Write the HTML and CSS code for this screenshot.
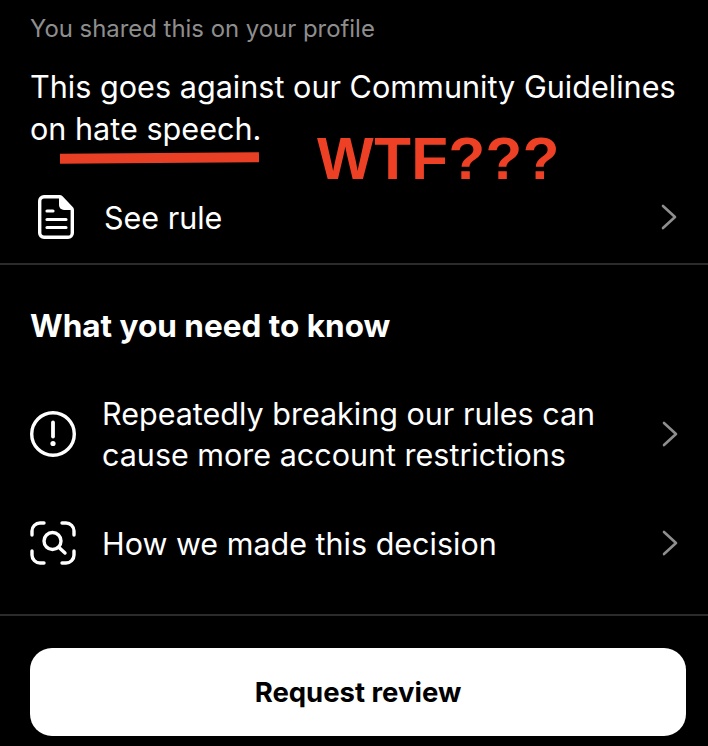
FILE: index.html
```html
<!DOCTYPE html>
<html lang="en">
<head>
    <meta charset="UTF-8">
    <title>Account status</title>
    <link rel="stylesheet" href="styles.css">
</head>
<body>
    <div class="screen">
        <section class="top-section">
            <div class="shared-note">You shared this on your profile</div>
            <div class="headline">This goes against our Community Guidelines<br>on hate speech.</div>
            <div class="scribble-line"></div>
            <div class="scribble-text">WTF???</div>
            <div class="row rule-row">
                <svg class="icon doc-icon" viewBox="0 0 36 44" width="36" height="44">
                    <path d="M6 1.700h15.500a2.500 2.500 0 0 1 1.800.8l10 10.400a2.500 2.500 0 0 1 1 1.900V38a4.300 4.300 0 0 1-4.300 4.300H6A4.300 4.300 0 0 1 1.700 38V6A4.300 4.300 0 0 1 6 1.700Z" fill="none" stroke="#fff" stroke-width="3.400"/>
                    <path d="M21 2v8a5 5 0 0 0 5 5h8V12L24 2Z" fill="#fff"/>
                    <path d="M9 16h6M9 24.500h19M9 32.500h19" fill="none" stroke="#fff" stroke-width="3.200" stroke-linecap="round"/>
                </svg>
                <span class="row-label">See rule</span>
                <svg class="chevron" viewBox="0 0 16 26" width="16" height="26"><path d="M2 2l12 11L2 24" fill="none" stroke="#8e8e8e" stroke-width="2.600" stroke-linecap="round" stroke-linejoin="round"/></svg>
            </div>
        </section>

        <section class="know-section">
            <h2>What you need to know</h2>
            <div class="row info-row">
                <svg class="icon" viewBox="0 0 46 46" width="46" height="46">
                    <circle cx="23" cy="23" r="21.300" fill="none" stroke="#fff" stroke-width="3.400"/>
                    <path d="M23 11.500v14" fill="none" stroke="#fff" stroke-width="3.800" stroke-linecap="round"/>
                    <circle cx="23" cy="32.500" r="2.600" fill="#fff"/>
                </svg>
                <span class="row-label">Repeatedly breaking our rules can cause more account restrictions</span>
                <svg class="chevron" viewBox="0 0 16 26" width="16" height="26"><path d="M2 2l12 11L2 24" fill="none" stroke="#8e8e8e" stroke-width="2.600" stroke-linecap="round" stroke-linejoin="round"/></svg>
            </div>
            <div class="row info-row">
                <svg class="icon" viewBox="0 0 46 44" width="46" height="44">
                    <path d="M14 2H10a8 8 0 0 0-8 8v4M32 2h4a8 8 0 0 1 8 8v4M14 42H10a8 8 0 0 1-8-8v-4M32 42h4a8 8 0 0 0 8-8v-4" fill="none" stroke="#fff" stroke-width="3.400" stroke-linecap="round"/>
                    <circle cx="22.500" cy="20" r="8.500" fill="none" stroke="#fff" stroke-width="3.400"/>
                    <path d="M29 26.500l6 5.500" fill="none" stroke="#fff" stroke-width="3.400" stroke-linecap="round"/>
                </svg>
                <span class="row-label">How we made this decision</span>
                <svg class="chevron" viewBox="0 0 16 26" width="16" height="26"><path d="M2 2l12 11L2 24" fill="none" stroke="#8e8e8e" stroke-width="2.600" stroke-linecap="round" stroke-linejoin="round"/></svg>
            </div>
        </section>

        <section class="action-section">
            <button class="review-btn">Request review</button>
        </section>
    </div>
</body>
</html>
```

FILE: styles.css
```css
html, body {
    margin: 0;
    background: #000;
}
.screen {
    width: 708px;
    height: 746px;
    overflow: hidden;
    font-family: Inter, "Liberation Sans", sans-serif;
    color: #fff;
    background: #000;
}
.top-section {
    position: relative;
    height: 265px;
    padding: 14px 30px 0;
    box-sizing: border-box;
    border-bottom: 2px solid #2b2b2b;
}
.shared-note {
    font-size: 23.9px;
    line-height: 30px;
    color: #8e8e8e;
}
.headline {
    width: fit-content;
    margin-top: 22px;
    font-size: 30.6px;
    line-height: 42px;
}
.scribble-line {
    position: absolute;
    left: 60px;
    top: 153px;
    width: 199px;
    height: 10px;
    background: #e93f25;
    transform: rotate(-0.5deg);
}
.scribble-text {
    position: absolute;
    left: 317px;
    top: 137px;
    font-family: "Liberation Sans", Arial, sans-serif;
    font-size: 60px;
    line-height: 44px;
    font-weight: bold;
    letter-spacing: 0.5px;
    color: #ee4024;
}
.row {
    display: flex;
    align-items: center;
}
.row-label {
    flex: 1;
    font-size: 30.5px;
    line-height: 41px;
}
.chevron {
    flex: none;
}
.rule-row {
    margin-top: 45px;
    padding: 0 0 0 8px;
}
.rule-row .row-label {
    margin-left: 30px;
}
.rule-row .chevron {
    margin-right: 1px;
}
.know-section {
    height: 351px;
    padding: 41px 30px 0;
    box-sizing: border-box;
    border-bottom: 2px solid #2b2b2b;
}
.know-section h2 {
    margin: 0;
    font-size: 31.5px;
    line-height: 40px;
    font-weight: 700;
}
.info-row {
    margin-top: 47px;
}
.info-row + .info-row {
    margin-top: 46px;
}
.info-row .row-label {
    margin-left: 26px;
}
.action-section {
    padding: 32px 22px 0 30px;
}
.review-btn {
    display: block;
    width: 656px;
    height: 88px;
    border: none;
    border-radius: 22px;
    background: #fff;
    color: #000;
    font-family: Inter, "Liberation Sans", sans-serif;
    font-size: 27.5px;
    font-weight: 700;
}
```
